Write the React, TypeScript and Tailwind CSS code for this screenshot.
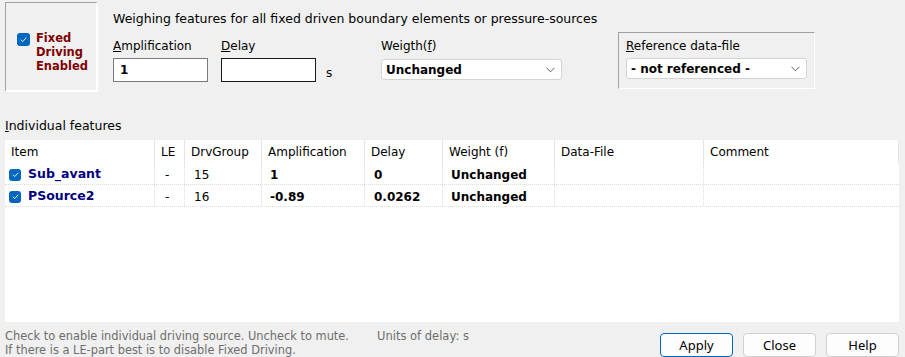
import React from "react";

// ─── DATA ──────────────────────────────────────────────
const columns = [
  { name: "Item", w: "w-[150px]" },
  { name: "LE", w: "w-[30px]" },
  { name: "DrvGroup", w: "w-[77px]" },
  { name: "Amplification", w: "w-[103px]" },
  { name: "Delay", w: "w-[78px]" },
  { name: "Weight (f)", w: "w-[112px]" },
  { name: "Data-File", w: "w-[149px]" },
  { name: "Comment", w: "w-[195px]" },
];

const rows = [
  { item: "Sub_avant", le: "-", grp: "15", amp: "1", delay: "0", weight: "Unchanged" },
  { item: "PSource2", le: "-", grp: "16", amp: "-0.89", delay: "0.0262", weight: "Unchanged" },
];

const ui = "font-['DejaVu_Sans',sans-serif]";
const cell = "h-full flex items-center pt-[2px] border-r border-dotted border-[#dcdcdc]";

function Check({ size = "w-[13px] h-[13px]" }: { size?: string }) {
  return (
    <span className={`${size} shrink-0 rounded-[3px] bg-[#0067c0] flex items-center justify-center`}>
      <svg width="9" height="9" viewBox="0 0 10 10" fill="none">
        <path d="M2 5.2 L4.2 7.3 L8 3" stroke="white" strokeWidth="1" />
      </svg>
    </span>
  );
}

function Combo({ value, w }: { value: string; w: string }) {
  return (
    <div className={`${w} h-[21px] bg-white border border-[#d4d4d4] rounded-[3px] flex items-center justify-between pl-[4px] pr-[6px]`}>
      <span className="font-bold text-[12px] text-black">{value}</span>
      <svg width="9" height="6" viewBox="0 0 9 6" fill="none">
        <path d="M0.5 0.8 L4.5 4.8 L8.5 0.8" stroke="#606060" strokeWidth="1" />
      </svg>
    </div>
  );
}

function Btn({ label, primary }: { label: string; primary?: boolean }) {
  return (
    <button
      className={`w-[73px] h-[24px] rounded-[4px] bg-[#fdfdfd] text-[13px] text-black font-['Noto_Sans',sans-serif] leading-none border
                  ${primary ? "border-[#0067c0]" : "border-[#d0d0d0]"}`}
    >
      {label}
    </button>
  );
}

export default function App() {
  return (
    <div className={`w-[905px] h-[357px] bg-[#f0f0f0] flex flex-col overflow-hidden text-[12px] text-black ${ui}`}>
      {/* ── Top section ── */}
      <div className="flex pt-[2px] pl-[5px] h-[118px]">
        <div className="w-[93px] h-[90px] border-t border-l border-[#a0a0a0] border-b-2 border-r-2 border-b-white border-r-white flex items-start pt-[28px] pl-[11px] gap-[6px]">
          <span className="mt-[2px]"><Check /></span>
          <span className="font-bold text-[#800000] text-[11.5px] leading-[14px]">
            Fixed<br />Driving<br />Enabled
          </span>
        </div>

        <div className="ml-[15px] flex flex-col">
          <div className="pt-[8px] h-[32px] text-[12.5px]">
            Weighing features for all fixed driven boundary elements or pressure-sources
          </div>
          <div className="flex items-start">
            <div className="flex flex-col w-[108px]">
              <span className="h-[24px] leading-[24px]"><u>A</u>mplification</span>
              <div className="w-[95px] h-[24px] bg-white border border-[#7a7a7a] flex items-center pl-[6px] font-bold">1</div>
            </div>
            <div className="flex flex-col w-[105px]">
              <span className="h-[24px] leading-[24px]"><u>D</u>elay</span>
              <div className="w-[95px] h-[24px] bg-white border border-[#1a1a1a]"></div>
            </div>
            <span className="mt-[30px] w-[55px]">s</span>
            <div className="flex flex-col">
              <span className="h-[25px] leading-[24px]">Weigth(<u>f</u>)</span>
              <Combo value="Unchanged" w="w-[181px]" />
            </div>
            <div className="ml-[56px] -mt-[2px] w-[197px] h-[57px] border-t border-l border-[#a0a0a0] border-b border-r border-b-white border-r-white flex flex-col pl-[7px]">
              <span className="h-[25px] leading-[26px]"><u>R</u>eference data-file</span>
              <Combo value="- not referenced -" w="w-[181px]" />
            </div>
          </div>
        </div>
      </div>

      {/* ── Individual features ── */}
      <div className="pl-[5px] h-[22px] leading-[16px] text-[12.5px]"><u>I</u>ndividual features</div>

      <div className="ml-[5px] w-[894px] h-[182px] bg-white flex flex-col">
        <div className="flex h-[23px]">
          {columns.map((c) => (
            <div key={c.name} className={`${c.w} h-full border-r border-[#e5e5e5] pl-[6px] pt-[1px] flex items-center`}>
              {c.name}
            </div>
          ))}
        </div>
        {rows.map((r) => (
          <div key={r.item} className="flex h-[22px] border-b border-dotted border-[#dcdcdc]">
            <div className={`w-[150px] pl-[4px] gap-[7px] ${cell}`}>
              <Check size="w-[12px] h-[12px]" />
              <span className="font-bold text-[#000080] text-[12.5px]">{r.item}</span>
            </div>
            <div className={`w-[30px] pl-[10px] ${cell}`}>{r.le}</div>
            <div className={`w-[77px] pl-[9px] ${cell}`}>{r.grp}</div>
            <div className={`w-[103px] pl-[8px] font-bold ${cell}`}>{r.amp}</div>
            <div className={`w-[78px] pl-[9px] font-bold ${cell}`}>{r.delay}</div>
            <div className={`w-[112px] pl-[8px] font-bold ${cell}`}>{r.weight}</div>
            <div className={`w-[149px] ${cell}`}></div>
            <div className="w-[195px]"></div>
          </div>
        ))}
      </div>

      {/* ── Footer ── */}
      <div className="flex pl-[5px] pt-[7px]">
        <div className="text-[11.4px] leading-[14px] text-[#6d6d6d] w-[372px] whitespace-nowrap">
          Check to enable individual driving source. Uncheck to mute.<br />
          If there is a LE-part best is to disable Fixed Driving.
        </div>
        <div className="text-[11.5px] leading-[14px] text-[#6d6d6d] w-[283px] whitespace-nowrap">Units of delay: s</div>
        <div className="flex gap-[10px] pt-[4px]">
          <Btn label="Apply" primary />
          <Btn label="Close" />
          <Btn label="Help" />
        </div>
      </div>
    </div>
  );
}
